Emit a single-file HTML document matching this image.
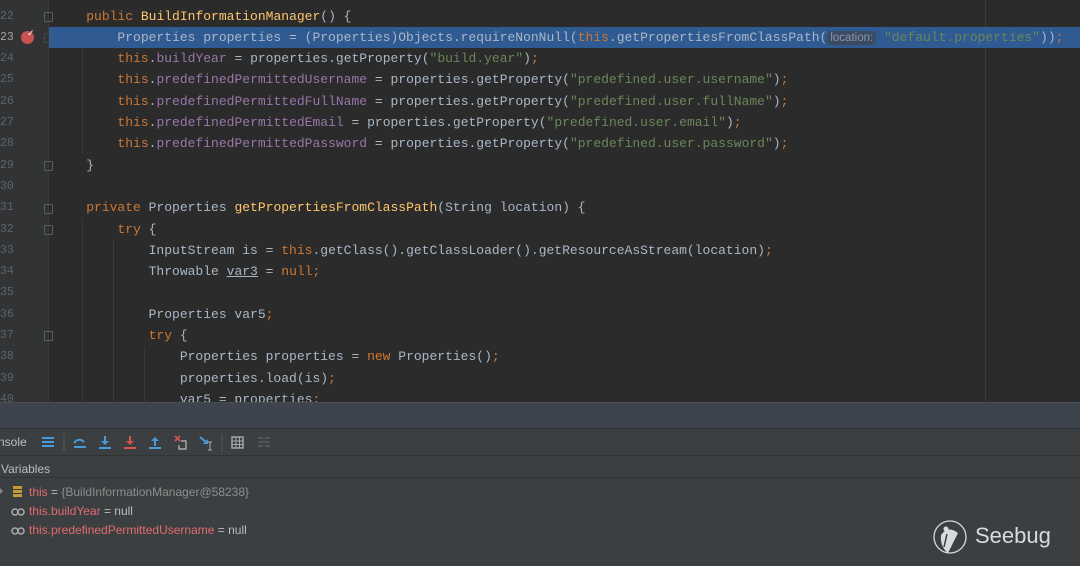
<!DOCTYPE html>
<html><head><meta charset="utf-8"><style>
*{margin:0;padding:0;box-sizing:border-box}
body{width:1080px;height:566px;overflow:hidden;background:#2b2b2b;position:relative;font-family:"Liberation Mono",monospace}
.ed{position:absolute;left:0;top:0;width:1080px;height:402px;background:#2b2b2b;overflow:hidden}
.gut{position:absolute;left:0;top:0;width:49px;height:402px;background:#313335;border-right:1px solid #3a3a3a}
.ln{position:absolute;left:0;width:12px;text-align:right;font-size:11.5px;color:#606366;height:21.3px;line-height:21.3px;overflow:visible}
.row{position:absolute;left:55px;right:0;height:21.3px;line-height:21.3px;font-size:13px;color:#a9b7c6;white-space:pre}
.hl{background:#2f5a92;left:49px;padding-left:6px}
.k{color:#cc7832}.f{color:#9876aa}.s{color:#6a8759}.m{color:#ffc66d}
.guide{position:absolute;width:1px;background:#393939}
.fold{position:absolute;left:44px;width:9px;height:10px;border:1px solid #5a5d5f;border-radius:1px}
.hint{background:#3b4b63;color:#8a97a8;font-family:"Liberation Sans",sans-serif;font-size:11.5px;border-radius:4px;padding:1px 3px}
.bar{position:absolute;left:0;top:402px;width:1080px;height:26px;background:#3d444e;border-top:1px solid #4a4e52}
.tb{position:absolute;left:0;top:428px;width:1080px;height:27px;background:#3c3f41;border-top:1px solid #323232;font-family:"Liberation Sans",sans-serif}
.vars{position:absolute;left:0;top:455px;width:1080px;height:111px;background:#3c3f41;border-top:1px solid #323232;font-family:"Liberation Sans",sans-serif;font-size:12px;color:#bbb}
.it{position:absolute;font-size:12px;white-space:pre}
.r{color:#e06c6c}.g{color:#8d8d8d}
</style></head><body>
<div class="ed">
<div class="gut"></div>
<div class="guide" style="left:82px;top:27px;height:126px"></div>
<div class="guide" style="left:82px;top:219px;height:190px"></div>
<div class="guide" style="left:113px;top:240px;height:170px"></div>
<div class="guide" style="left:144px;top:346px;height:60px"></div>
<div class="guide" style="left:985px;top:0;height:402px;background:#3a3a3a"></div>

<div class="ln" style="top:5.5px">22</div><div class="row" style="top:5.5px">    <span class="k">public</span> <span class="m">BuildInformationManager</span>() {</div>
<div class="ln" style="top:26.8px;color:#a4a3a3">23</div><div class="row hl" style="top:26.8px">        Properties properties = (Properties)Objects.requireNonNull(<span class="k">this</span>.getPropertiesFromClassPath(<span class="hint">location:</span> <span class="s">"default.properties"</span>))<span class="k">;</span></div>
<div style="position:absolute;left:21px;top:31px;width:13px;height:13px;border-radius:50%;background:#c75450"></div>
<div style="position:absolute;left:27px;top:29px;color:#fff;font-size:9px;font-family:'DejaVu Sans'">✓</div>
<div class="ln" style="top:48.1px">24</div><div class="row" style="top:48.1px">        <span class="k">this</span>.<span class="f">buildYear</span> = properties.getProperty(<span class="s">"build.year"</span>)<span class="k">;</span></div>
<div class="ln" style="top:69.4px">25</div><div class="row" style="top:69.4px">        <span class="k">this</span>.<span class="f">predefinedPermittedUsername</span> = properties.getProperty(<span class="s">"predefined.user.username"</span>)<span class="k">;</span></div>
<div class="ln" style="top:90.7px">26</div><div class="row" style="top:90.7px">        <span class="k">this</span>.<span class="f">predefinedPermittedFullName</span> = properties.getProperty(<span class="s">"predefined.user.fullName"</span>)<span class="k">;</span></div>
<div class="ln" style="top:112px">27</div><div class="row" style="top:112px">        <span class="k">this</span>.<span class="f">predefinedPermittedEmail</span> = properties.getProperty(<span class="s">"predefined.user.email"</span>)<span class="k">;</span></div>
<div class="ln" style="top:133.3px">28</div><div class="row" style="top:133.3px">        <span class="k">this</span>.<span class="f">predefinedPermittedPassword</span> = properties.getProperty(<span class="s">"predefined.user.password"</span>)<span class="k">;</span></div>
<div class="ln" style="top:154.6px">29</div><div class="row" style="top:154.6px">    }</div>
<div class="ln" style="top:175.9px">30</div>
<div class="ln" style="top:197.2px">31</div><div class="row" style="top:197.2px">    <span class="k">private</span> Properties <span class="m">getPropertiesFromClassPath</span>(String location) {</div>
<div class="ln" style="top:218.5px">32</div><div class="row" style="top:218.5px">        <span class="k">try</span> {</div>
<div class="ln" style="top:239.8px">33</div><div class="row" style="top:239.8px">            InputStream is = <span class="k">this</span>.getClass().getClassLoader().getResourceAsStream(location)<span class="k">;</span></div>
<div class="ln" style="top:261.1px">34</div><div class="row" style="top:261.1px">            Throwable <u>var3</u> = <span class="k">null;</span></div>
<div class="ln" style="top:282.4px">35</div>
<div class="ln" style="top:303.7px">36</div><div class="row" style="top:303.7px">            Properties var5<span class="k">;</span></div>
<div class="ln" style="top:325px">37</div><div class="row" style="top:325px">            <span class="k">try</span> {</div>
<div class="ln" style="top:346.3px">38</div><div class="row" style="top:346.3px">                Properties properties = <span class="k">new</span> Properties()<span class="k">;</span></div>
<div class="ln" style="top:367.6px">39</div><div class="row" style="top:367.6px">                properties.load(is)<span class="k">;</span></div>
<div class="ln" style="top:388.9px">40</div><div class="row" style="top:388.9px">                var5 = properties<span class="k">;</span></div>
<div class="fold" style="top:12px"></div><div class="fold" style="top:33px;opacity:.5"></div><div class="fold" style="top:161px"></div><div class="fold" style="top:204px"></div><div class="fold" style="top:225px"></div><div class="fold" style="top:331px"></div>
</div>
<div class="bar"></div>
<div class="tb">
<span style="position:absolute;left:-2px;top:6px;font-size:12px;color:#bbb">nsole</span>
<svg width="300" height="27" style="position:absolute;left:0;top:0">
<g fill="#4a9ad8"><rect x="42" y="8" width="12" height="2"/><rect x="42" y="12" width="12" height="2"/><rect x="42" y="16" width="12" height="2"/></g>
<line x1="64" y1="5" x2="64" y2="23" stroke="#555"/>
<g stroke="#4a9ad8" stroke-width="2" fill="none"><path d="M74 14 Q79 8 84 13"/><line x1="74" y1="18" x2="86" y2="18"/></g>
<g stroke="#4a9ad8" stroke-width="2"><line x1="105" y1="7" x2="105" y2="15"/><line x1="99" y1="19" x2="111" y2="19"/></g><path d="M101 12 L105 16 L109 12Z" fill="#4a9ad8"/>
<g stroke="#d9534f" stroke-width="2"><line x1="130" y1="7" x2="130" y2="15"/><line x1="124" y1="19" x2="136" y2="19"/></g><path d="M126 12 L130 16 L134 12Z" fill="#d9534f"/>
<g stroke="#4a9ad8" stroke-width="2"><line x1="155" y1="10" x2="155" y2="17"/><line x1="149" y1="19" x2="161" y2="19"/></g><path d="M151 12 L155 8 L159 12Z" fill="#4a9ad8"/>
<path d="M175 7 L180 12 M180 7 L175 12" stroke="#d9534f" stroke-width="1.6"/><path d="M181 12 H186 V20 H179 V16" stroke="#aaa" fill="none" stroke-width="1.4"/>
<path d="M200 8 L207 14" stroke="#4a9ad8" stroke-width="2"/><path d="M203 15 L208 15 L208 10Z" fill="#4a9ad8"/><path d="M210 13 V21 M208 13 H212 M208 21 H212" stroke="#aaa"/>
<line x1="222" y1="5" x2="222" y2="23" stroke="#555"/>
<rect x="232" y="8" width="11" height="11" fill="none" stroke="#aaa" stroke-width="1.4"/><path d="M232 12H243M232 15.5H243M236 8V19M239.5 8V19" stroke="#aaa"/>
<path d="M258 9H263M258 13H270M258 17H263M265 9H270M265 17H270" stroke="#5a5d5f" stroke-width="1.4"/>
</svg></div>
<div class="vars">
<div class="it" style="left:1px;top:6px">Variables</div>
<div style="position:absolute;left:0;top:21px;width:1080px;border-top:1px solid #323232"></div>
<svg width="30" height="80" style="position:absolute;left:0;top:28px">
<g fill="#c59a3a"><rect x="13" y="2" width="9" height="3"/><rect x="13" y="6" width="9" height="3"/><rect x="13" y="10" width="9" height="3"/></g>
<g fill="none" stroke="#aaa" stroke-width="1.5"><circle cx="15" cy="28" r="3"/><circle cx="21" cy="28" r="3"/><circle cx="15" cy="47" r="3"/><circle cx="21" cy="47" r="3"/></g>
<path d="M0 4 L3 7 L0 10" fill="#888"/>
</svg>
<div class="it" style="left:29px;top:29px"><span class="r">this</span> = <span class="g">{BuildInformationManager@58238}</span></div>
<div class="it" style="left:29px;top:48px"><span class="r">this.buildYear</span> = null</div>
<div class="it" style="left:29px;top:67px"><span class="r">this.predefinedPermittedUsername</span> = null</div>
<svg width="40" height="40" style="position:absolute;left:930px;top:61px" viewBox="0 0 40 40"><circle cx="20" cy="20" r="16" fill="none" stroke="#d8dadb" stroke-width="1.3"/><path d="M11 18 Q18 8 28 16 L18 36 Q10 30 11 18Z" fill="#d8dadb"/><circle cx="16" cy="12" r="2.5" fill="#d8dadb"/><path d="M17 17 L14 30" stroke="#3c3f41" stroke-width="1.5"/></svg>
<div style="position:absolute;left:975px;top:67px;font-family:'Liberation Sans',sans-serif;font-size:22px;color:#d8dadb">Seebug</div>
</div>
</body></html>
